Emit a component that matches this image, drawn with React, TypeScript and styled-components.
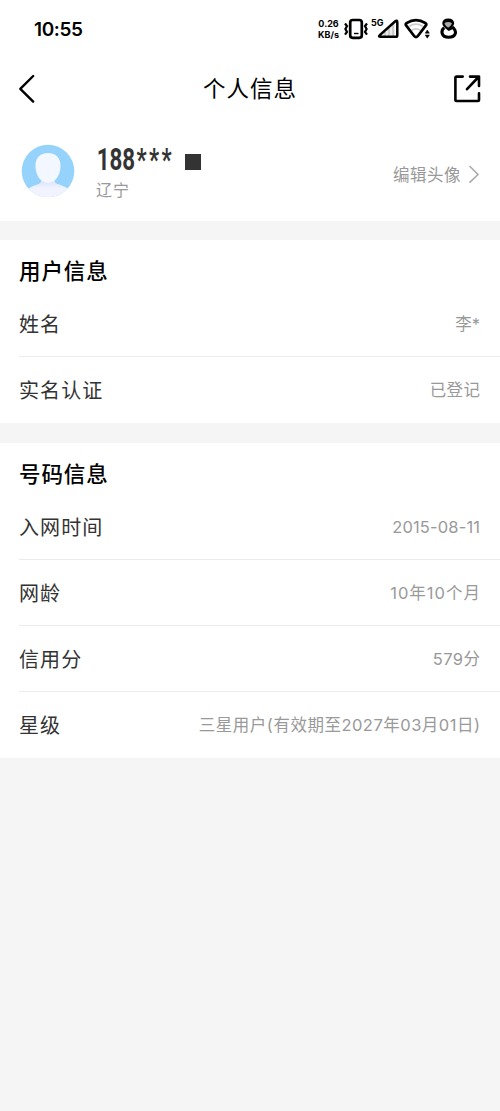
import React from "react";
import styled, { createGlobalStyle } from "styled-components";

const GlobalStyle = createGlobalStyle`
  * { box-sizing: border-box; }
  body {
    margin: 0;
    background: #f5f5f5;
    font-family: Inter, "Noto Sans CJK SC", sans-serif;
    color: #333;
  }
`;

const Page = styled.main`
  width: 500px;
  min-height: 1111px;
  background: #f5f5f5;
`;

const Top = styled.header`
  height: 221px;
  background: #fff;
`;

const StatusBar = styled.div`
  height: 58px;
  padding: 0 42px 0 34px;
  display: flex;
  align-items: center;
  justify-content: space-between;
`;

const Clock = styled.span`
  padding-top: 1px;
  font-size: 19px;
  line-height: 24px;
  font-weight: 600;
  letter-spacing: -0.4px;
  color: #000;
`;

const StatusIcons = styled.div`
  display: flex;
  align-items: center;
`;

const Speed = styled.div`
  width: 23px;
  margin-right: 4px;
  font-size: 9px;
  line-height: 11px;
  font-weight: 700;
  text-align: center;
  white-space: nowrap;
  color: #000;
`;

const Network = styled.span`
  align-self: flex-start;
  width: 13px;
  margin-left: 3px;
  font-size: 9px;
  line-height: 9px;
  font-weight: 700;
  color: #000;
`;

const NavBar = styled.nav`
  height: 62px;
  padding: 0 18px;
  display: grid;
  grid-template-columns: 30px 1fr 30px;
  align-items: center;
`;

const PageTitle = styled.h1`
  margin: 0;
  text-align: center;
  font-size: 22.5px;
  line-height: 32px;
  font-weight: 400;
  letter-spacing: 1px;
  color: #000;
`;

const Profile = styled.div`
  height: 101px;
  padding: 24px 20px 0 21px;
  display: flex;
`;

const ProfileText = styled.div`
  flex: 1;
  margin-left: 21px;
`;

const PhoneLine = styled.div`
  height: 34px;
  display: flex;
  align-items: flex-start;
`;

const Phone = styled.strong`
  width: 89px;
  padding-left: 1px;
  font-family: Roboto, sans-serif;
  font-size: 31px;
  line-height: 31px;
  font-weight: 700;
  white-space: nowrap;
  transform: scaleX(0.72);
  transform-origin: left center;
`;

const PhoneStars = styled.span`
  margin-left: 2px;
  letter-spacing: 3.3px;
`;

const Mask = styled.span`
  width: 16px;
  height: 16px;
  margin-top: 10px;
  background: #333;
`;

const Region = styled.div`
  font-size: 16px;
  line-height: 24px;
  letter-spacing: 0.9px;
  color: #999;
`;

const EditAvatar = styled.div`
  height: 60px;
  display: flex;
  align-items: center;
  gap: 7px;
  font-size: 16.5px;
  letter-spacing: 0.5px;
  color: #999;
`;

const Section = styled.section<{ $gap: number }>`
  margin-top: ${(p) => p.$gap}px;
  background: #fff;
`;

const SectionTitle = styled.h2<{ $height: number }>`
  height: ${(p) => p.$height}px;
  margin: 0;
  padding: 15px 19px 0;
  font-size: 21.5px;
  line-height: 32px;
  font-weight: 500;
  letter-spacing: 0.9px;
  color: #000;
`;

const Row = styled.div<{ $last: boolean }>`
  height: 66px;
  margin-left: 19px;
  padding: 2px 20px 0 0;
  display: flex;
  align-items: center;
  justify-content: space-between;
  border-bottom: 1px solid ${(p) => (p.$last ? "transparent" : "#ebebeb")};
`;

const Label = styled.span`
  font-size: 20px;
  line-height: 30px;
  letter-spacing: 1.1px;
`;

const Value = styled.span<{ $spacing: number }>`
  padding-bottom: 2px;
  font-size: 16.5px;
  line-height: 24px;
  letter-spacing: ${(p) => p.$spacing}px;
  margin-right: ${(p) => -p.$spacing}px;
  color: #999;
`;

type Item = { label: string; value: string; spacing: number };

const userItems: Item[] = [
  { label: "姓名", value: "李*", spacing: 0 },
  { label: "实名认证", value: "已登记", spacing: 0.4 },
];

const numberItems: Item[] = [
  { label: "入网时间", value: "2015-08-11", spacing: 0.15 },
  { label: "网龄", value: "10年10个月", spacing: 1 },
  { label: "信用分", value: "579分", spacing: 0.4 },
  { label: "星级", value: "三星用户(有效期至2027年03月01日)", spacing: 0.5 },
];

const InfoSection = ({ title, items, gap, titleHeight }: { title: string; items: Item[]; gap: number; titleHeight: number }) => (
  <Section $gap={gap}>
    <SectionTitle $height={titleHeight}>{title}</SectionTitle>
    {items.map((item, i) => (
      <Row key={item.label} $last={i === items.length - 1}>
        <Label>{item.label}</Label>
        <Value $spacing={item.spacing}>{item.value}</Value>
      </Row>
    ))}
  </Section>
);

const VibrateIcon = () => (
  <svg width="24" height="22" viewBox="0 0 24 22" fill="none" stroke="#000">
    <rect x="6.2" y="2" width="11.6" height="17.8" rx="2.5" strokeWidth="2.7" />
    <path d="M10 15.5h4.5" strokeWidth="1.4" />
    <path d="M1 5.5l2 2.6L1.4 11l1.6 3L1 16.7M23 5.5l-2 2.6 1.6 2.9-1.6 3 2 2.7" strokeWidth="2.2" />
  </svg>
);

const SignalIcon = () => (
  <Shifted width="22" height="22" viewBox="0 0 22 22" fill="none" $left={-7}>
    <path d="M8 18v-4M12 18v-8M16 18V6" stroke="#ccc" strokeWidth="2.8" />
    <path d="M18 3.5Q20.3 1.4 20.3 4.5v12.7q0 1.6-1.6 1.6H3.5q-2.5 0-.7-1.7z" stroke="#000" strokeWidth="2.5" />
  </Shifted>
);

const Shifted = styled.svg<{ $left: number }>`
  margin-left: ${(p) => p.$left}px;
`;

const WifiIcon = () => (
  <Shifted width="27" height="22" viewBox="0 0 27 22" fill="none" $left={5}>
    <path d="M5 8.4q7-4.4 14 0M7.5 12.4q4.5-3 9 0" stroke="#ccc" strokeWidth="1.8" />
    <path d="M2.5 5.2Q12 -.8 21.5 5.2q1.3 .9.4 2.2l-8.2 10.8q-1.7 1.9-3.4 0L2.1 7.4q-.9-1.3.4-2.2z" stroke="#000" strokeWidth="2.7" />
    <path d="M21.2 15.2l2.1-3.2 2.1 3.2zM21.2 17h4.2l-2.1 3.2z" fill="#000" stroke="#000" strokeWidth=".5" />
  </Shifted>
);

const BadgeIcon = () => (
  <Shifted width="18" height="22" viewBox="0 0 18 22" fill="none" $left={9}>
    <path d="M4.2 9.8C.6 12.5 1 19.3 8.7 19.3s8.1-6.3 4.7-9" stroke="#000" strokeWidth="3.1" />
    <path d="M3.4 5.6Q3.6 1.6 8.2 1.6t4.8 4q0 2-4.8 5.6-4.8-3.6-4.8-5.6z" fill="#aaa" stroke="#000" strokeWidth="2.3" />
    <path d="M4 4.4q4.2-2.6 8.4 0" stroke="#000" strokeWidth="1.6" />
    <path d="M8.2 12l6.2-3" stroke="#000" strokeWidth="2.4" />
  </Shifted>
);

const BackIcon = () => (
  <svg width="18" height="30" viewBox="0 0 18 30" fill="none" stroke="#000" strokeWidth="2.4" strokeLinecap="round" strokeLinejoin="round">
    <path d="M15.2 2L2.3 14.8l12.9 12.8" />
  </svg>
);

const ShareIcon = () => (
  <svg width="30" height="30" viewBox="0 0 30 30" fill="none" stroke="#000" strokeWidth="2.6" strokeLinecap="round" strokeLinejoin="round">
    <path d="M10.7 2.6H4.6Q3.4 2.6 3.4 3.8v22q0 1.2 1.2 1.2h21.2q1.2 0 1.2-1.2v-6.5M18 2.6h9v9.4M26.5 3L15 15.2" />
  </svg>
);

const Avatar = () => (
  <svg width="54" height="54" viewBox="0 0 54 54">
    <defs>
      <clipPath id="disc"><circle cx="27" cy="27" r="26.3" /></clipPath>
      <linearGradient id="body" x1="0" y1="0" x2="0" y2="1">
        <stop offset="0" stopColor="#d3dcf8" />
        <stop offset="0.5" stopColor="#f1f4ff" />
      </linearGradient>
    </defs>
    <g clipPath="url(#disc)">
      <rect width="54" height="54" fill="#95d3fc" />
      <path d="M5 46Q12 41.5 18 39.8 20.5 39 20.5 34h13q0 5 2.5 5.8 6 1.7 14 6.2v9H5z" fill="url(#body)" />
      <path d="M27 9c8 0 12.9 5.3 12.5 13.5C39.2 31 35 38.7 27 38.7S14.8 31 14.5 22.5C14.1 14.3 19 9 27 9z" fill="#f3f7ff" />
    </g>
  </svg>
);

const ChevronIcon = () => (
  <svg width="12" height="20" viewBox="0 0 12 20" fill="none" stroke="#aaa" strokeWidth="1.6">
    <path d="M1.5 2L10 10.5l-8.5 8.2" />
  </svg>
);

export default function App() {
  return (
    <Page>
      <GlobalStyle />
      <Top>
        <StatusBar>
          <Clock>10:55</Clock>
          <StatusIcons>
            <Speed>0.26<br />KB/s</Speed>
            <VibrateIcon />
            <Network>5G</Network>
            <SignalIcon />
            <WifiIcon />
            <BadgeIcon />
          </StatusIcons>
        </StatusBar>
        <NavBar>
          <BackIcon />
          <PageTitle>个人信息</PageTitle>
          <ShareIcon />
        </NavBar>
        <Profile>
          <Avatar />
          <ProfileText>
            <PhoneLine>
              <Phone>188<PhoneStars>***</PhoneStars></Phone>
              <Mask />
            </PhoneLine>
            <Region>辽宁</Region>
          </ProfileText>
          <EditAvatar>
            编辑头像
            <ChevronIcon />
          </EditAvatar>
        </Profile>
      </Top>
      <InfoSection title="用户信息" items={userItems} gap={19} titleHeight={51} />
      <InfoSection title="号码信息" items={numberItems} gap={20} titleHeight={51} />
    </Page>
  );
}
